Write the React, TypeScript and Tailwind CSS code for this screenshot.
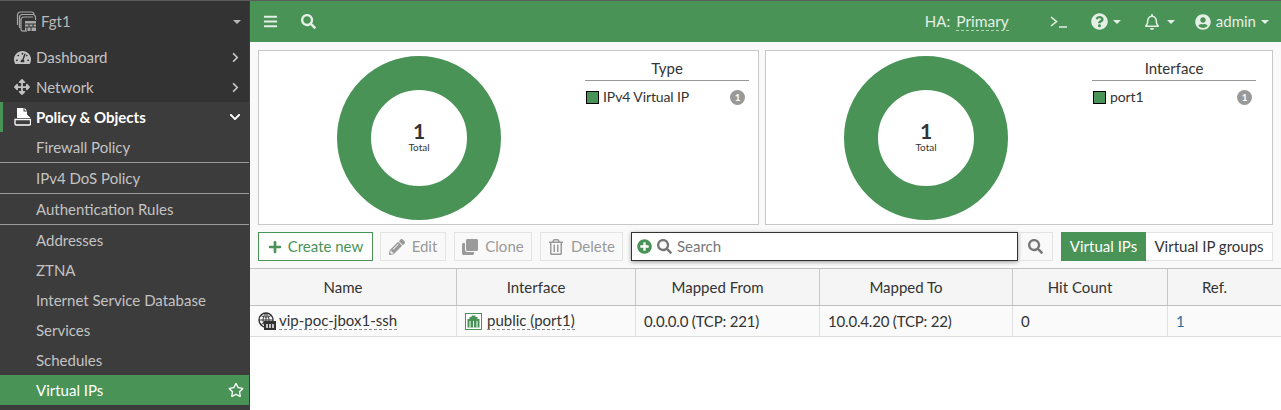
import { FaBars, FaChevronDown, FaChevronRight, FaClone, FaPencilAlt, FaPlus, FaPlusCircle, FaQuestionCircle, FaRegBell, FaRegStar, FaRegTrashAlt, FaSearch, FaTachometerAlt, FaUserCircle, FaArrowsAlt } from "react-icons/fa"

function Caret({ className }: { className: string }) {
  return <span className={`inline-block w-0 h-0 border-x-[4px] border-x-transparent border-t-[4px] ${className}`} />
}

function FgtLogo() {
  return (
    <svg width="21" height="21" viewBox="0 0 21 21" fill="none" stroke="#a8a8a8" strokeWidth="1.2">
      <path d="M1.5 14V4a3 3 0 0 1 3-3h11a2.5 2.5 0 0 1 2.5 2.5" />
      <path d="M3.5 17V6.500a3 3 0 0 1 3-3h10a3 3 0 0 1 3 3V9" />
      <path d="M6 20a2 2 0 0 1-1-2V9a3 3 0 0 1 3-3h9" />
      <path d="M6 20h5" />
      <rect x="9" y="10" width="11" height="10" fill="#a8a8a8" stroke="none" />
      <path d="M9 13h11M9 16h11M13 13v3M17 13v3M11 16v4M15 16v4" stroke="#333333" strokeWidth="1" />
    </svg>
  )
}

function PolicyIcon() {
  return (
    <svg width="17" height="18" viewBox="0 0 17 18" fill="#ffffff">
      <path d="M3 0h6.500v3.500H13V10H3z" />
      <path d="M10.500 0L13 2.500h-2.500z" />
      <path d="M13 6.500l3.500 3.500H13z" />
      <path d="M1 11.500h15.500v4.300a1.200 1.200 0 0 1-1.200 1.200H2.200A1.200 1.200 0 0 1 1 15.800z" fill="none" stroke="#ffffff" strokeWidth="1.300" />
    </svg>
  )
}

function VipIcon() {
  return (
    <svg width="18" height="18" viewBox="0 0 18 18">
      <circle cx="8" cy="8" r="7" fill="#ffffff" stroke="#333333" strokeWidth="1.400" />
      <path d="M1 8h14M8 1v14M3 3.500c3 2 7 2 10 0M3 12.500c3-2 7-2 10 0M8 1c-4 4-4 10 0 14M8 1c4 4 4 10 0 14" fill="none" stroke="#333333" strokeWidth="1" />
      <rect x="6" y="9" width="12" height="9" fill="#333333" />
      <path d="M9 12v4M12 12v4M15 12v4" stroke="#ffffff" strokeWidth="1.400" />
    </svg>
  )
}

function PortIcon() {
  return (
    <svg width="17" height="17" viewBox="0 0 17 17">
      <rect x="0.500" y="0.500" width="16" height="16" fill="#ffffff" stroke="#4a9357" />
      <path d="M2.500 14.500V6h2V4h2V2.500h4V4h2v2h2v8.500z" fill="#4a9357" />
      <path d="M5 8v6.500M8.500 8v6.500M12 8v6.500" stroke="#ffffff" strokeWidth="1" />
    </svg>
  )
}

function NavRow({ label, icon, chevron, active, divider }: { label: string; icon?: React.ReactNode; chevron?: "right" | "down"; active?: boolean; divider?: boolean }) {
  return (
    <div className={`relative flex h-[30px] shrink-0 items-center pl-9 pr-[8px] ${divider ? "box-content border-b border-[#9a9a9a]" : ""} ${active ? "font-bold text-white" : "text-[#c3c3c3]"}`}>
      {icon && <span className="absolute left-3 flex w-5 justify-center">{icon}</span>}
      <span>{label}</span>
      {chevron === "right" && <FaChevronRight className="ml-auto text-[11px] text-[#c3c3c3]" />}
      {chevron === "down" && <FaChevronDown className="ml-auto text-[12px] text-white" />}
    </div>
  )
}

function Sidebar() {
  return (
    <aside className="flex h-full w-[250px] shrink-0 flex-col bg-[#3c3c3c] pr-px text-[15px]">
      <div className="bg-[#333333]">
        <div className="flex h-[41px] items-center pl-[16px] pr-[8px] text-[#b9b9b9]">
          <FgtLogo />
          <span className="ml-[4px]">Fgt1</span>
          <Caret className="ml-auto border-t-[#b9b9b9]" />
        </div>
        <NavRow label="Dashboard" icon={<FaTachometerAlt className="text-[17px] text-[#c3c3c3]" />} chevron="right" />
        <NavRow label="Network" icon={<FaArrowsAlt className="text-[16px] text-[#c3c3c3]" />} chevron="right" />
      </div>
      <div className="border-l-[3px] border-[#4a9357]">
        <div className="-ml-[3px]">
          <NavRow label="Policy & Objects" icon={<PolicyIcon />} chevron="down" active />
        </div>
      </div>
      <NavRow label="Firewall Policy" divider />
      <NavRow label="IPv4 DoS Policy" divider />
      <NavRow label="Authentication Rules" divider />
      <NavRow label="Addresses" />
      <NavRow label="ZTNA" />
      <NavRow label="Internet Service Database" />
      <NavRow label="Services" />
      <NavRow label="Schedules" />
      <div className="flex h-[30px] shrink-0 items-center bg-[#4a9357] pl-9 pr-[5px] text-white">
        <span>Virtual IPs</span>
        <FaRegStar className="ml-auto text-[16px]" />
      </div>
    </aside>
  )
}

function TopBar() {
  return (
    <header className="flex h-[41px] shrink-0 items-center bg-[#4a9357] pl-[13px] pr-[12px] text-[15px] text-[#e4efe6]">
      <FaBars className="text-[15px]" />
      <FaSearch className="ml-[23px] text-[15px]" />
      <div className="ml-auto flex items-center">
        <span>HA:</span>
        <span className="ml-[6px] border-b border-dashed border-[#b5d3bb] text-[15.5px] leading-[18px]">Primary</span>
        <svg className="ml-[41px]" width="18" height="12" viewBox="0 0 18 12" fill="none" stroke="#e4efe6" strokeWidth="1.600">
          <path d="M1 1l5.500 4.500L1 10M9 11h8" />
        </svg>
        <FaQuestionCircle className="ml-[23px] text-[17px]" />
        <Caret className="ml-[5px] border-t-[#e4efe6]" />
        <FaRegBell className="ml-[23px] text-[16px]" />
        <Caret className="ml-[7px] border-t-[#e4efe6]" />
        <FaUserCircle className="ml-[20px] text-[16px]" />
        <span className="ml-[5px]">admin</span>
        <Caret className="ml-[5px] border-t-[#e4efe6]" />
      </div>
    </header>
  )
}

function DonutCard({ title, legend, width, legendMargin }: { title: string; legend: string; width: string; legendMargin: string }) {
  return (
    <div className={`flex h-[175px] items-start border border-[#c8c8c8] bg-white ${width}`}>
      <div className="relative ml-[78px] mt-[5px] h-[164px] w-[164px] shrink-0">
        <svg width="164" height="164" viewBox="0 0 164 164">
          <circle cx="82" cy="82" r="65" fill="none" stroke="#4a9357" strokeWidth="34" />
        </svg>
        <div className="absolute inset-0 flex flex-col items-center justify-center pb-[3px] text-[#333333]">
          <span className="text-[21px] font-bold leading-[20px]">1</span>
          <span className="text-[10px] leading-[12px]">Total</span>
        </div>
      </div>
      <div className={`ml-auto mt-[7px] w-[164px] text-[#333333] ${legendMargin}`}>
        <div className="border-b border-[#999999] pb-[1px] text-center text-[15px] leading-[21px]">{title}</div>
        <div className="mt-[6px] flex items-center pl-[1px] pr-[4px] text-[14px] leading-[20px] tracking-[-0.1px]">
          <span className="h-[13px] w-[13px] border border-black bg-[#4a9357]" />
          <span className="ml-[4px]">{legend}</span>
          <span className="ml-auto flex h-[15px] w-[15px] items-center justify-center rounded-full bg-[#999999] text-[10px] font-bold text-white">1</span>
        </div>
      </div>
    </div>
  )
}

function ToolButton({ icon, label, width }: { icon: React.ReactNode; label: string; width: string }) {
  return (
    <div className={`flex h-[29px] items-center justify-center gap-[7px] border border-[#e3e3e3] text-[15px] text-[#9a9a9a] ${width}`}>
      {icon}
      <span>{label}</span>
    </div>
  )
}

const columns = [
  { label: "Name", width: "w-[207px]" },
  { label: "Interface", width: "w-[179px]" },
  { label: "Mapped From", width: "w-[184px]" },
  { label: "Mapped To", width: "w-[193px]" },
  { label: "Hit Count", width: "w-[155px]" },
  { label: "Ref.", width: "flex-1" },
]

function Cell({ width, children }: { width: string; children: React.ReactNode }) {
  return <div className={`flex items-center border-r border-[#e0e0e0] px-[8px] last:border-r-0 ${width}`}>{children}</div>
}

function VipTable() {
  return (
    <div className="text-[15px] text-[#333333]">
      <div className="flex h-[38px] border-y border-[#c0c0c0] bg-[#f5f5f5]">
        {columns.map((c) => (
          <div key={c.label} className={`flex items-center justify-center border-r border-[#c8c8c8] pr-[20px] last:border-r-0 ${c.width}`}>
            {c.label}
          </div>
        ))}
      </div>
      <div className="flex h-[31px] border-b border-[#dddddd] bg-[#fafafa]">
        <Cell width={columns[0].width}>
          <VipIcon />
          <span className="ml-[3px] border-b border-dashed border-[#888888] leading-[17px]">vip-poc-jbox1-ssh</span>
        </Cell>
        <Cell width={columns[1].width}>
          <PortIcon />
          <span className="ml-[5px] border-b border-dashed border-[#888888] leading-[17px]">public (port1)</span>
        </Cell>
        <Cell width={columns[2].width}>
          <span className="tracking-[-0.18px]">0.0.0.0 (TCP: 221)</span>
        </Cell>
        <Cell width={columns[3].width}>
          <span className="tracking-[-0.18px]">10.0.4.20 (TCP: 22)</span>
        </Cell>
        <Cell width={columns[4].width}>0</Cell>
        <Cell width={columns[5].width}>
          <span className="text-[#1f6f9f]">1</span>
        </Cell>
      </div>
    </div>
  )
}

export default function App() {
  return (
    <div className="flex h-[410px] w-[1281px] overflow-hidden border-t border-[#5c5c5c] bg-[#333333] font-['Lato',sans-serif]">
      <Sidebar />
      <main className="flex min-w-0 flex-1 flex-col bg-white">
        <TopBar />
        <div className="flex flex-col bg-[#f9f9f9]">
          <div className="flex gap-[6px] pl-[8px] pr-[8px] pt-[8px]">
            <DonutCard title="Type" legend="IPv4 Virtual IP" width="w-[501px]" legendMargin="mr-[9px]" />
            <DonutCard title="Interface" legend="port1" width="w-[508px]" legendMargin="mr-[16px]" />
          </div>
          <div className="flex items-center pb-[7px] pl-[8px] pr-[8px] pt-[7px]">
            <div className="flex h-[29px] w-[115px] items-center justify-center gap-[6px] border border-[#4a9357] bg-white text-[15px] text-[#4a9357]">
              <FaPlus className="text-[14px]" />
              <span>Create new</span>
            </div>
            <div className="ml-[7px]">
              <ToolButton icon={<FaPencilAlt className="text-[16px]" />} label="Edit" width="w-[66px]" />
            </div>
            <div className="ml-[8px]">
              <ToolButton icon={<FaClone className="text-[16px]" />} label="Clone" width="w-[78px]" />
            </div>
            <div className="ml-[8px]">
              <ToolButton icon={<FaRegTrashAlt className="text-[16px]" />} label="Delete" width="w-[83px]" />
            </div>
            <div className="ml-[8px] flex h-[29px] w-[387px] items-center gap-[5px] border border-[#333333] bg-white pl-[5px] text-[15px] text-[#777777] shadow-[0_1px_4px_rgba(0,0,0,0.4)]">
              <FaPlusCircle className="text-[15px] text-[#4a9357]" />
              <FaSearch className="text-[15px] text-[#777777]" />
              <span>Search</span>
            </div>
            <div className="flex h-[29px] w-[35px] items-center justify-center border-y border-r border-[#e3e3e3]">
              <FaSearch className="text-[15px] text-[#777777]" />
            </div>
            <div className="ml-[8px] flex h-[29px] border border-[#e3e3e3] bg-white text-[15px] text-[#333333]">
              <div className="-my-px -ml-px flex w-[85px] items-center justify-center bg-[#4a9357] text-white">Virtual IPs</div>
              <div className="flex w-[126px] items-center justify-center">Virtual IP groups</div>
            </div>
          </div>
        </div>
        <VipTable />
      </main>
    </div>
  )
}
